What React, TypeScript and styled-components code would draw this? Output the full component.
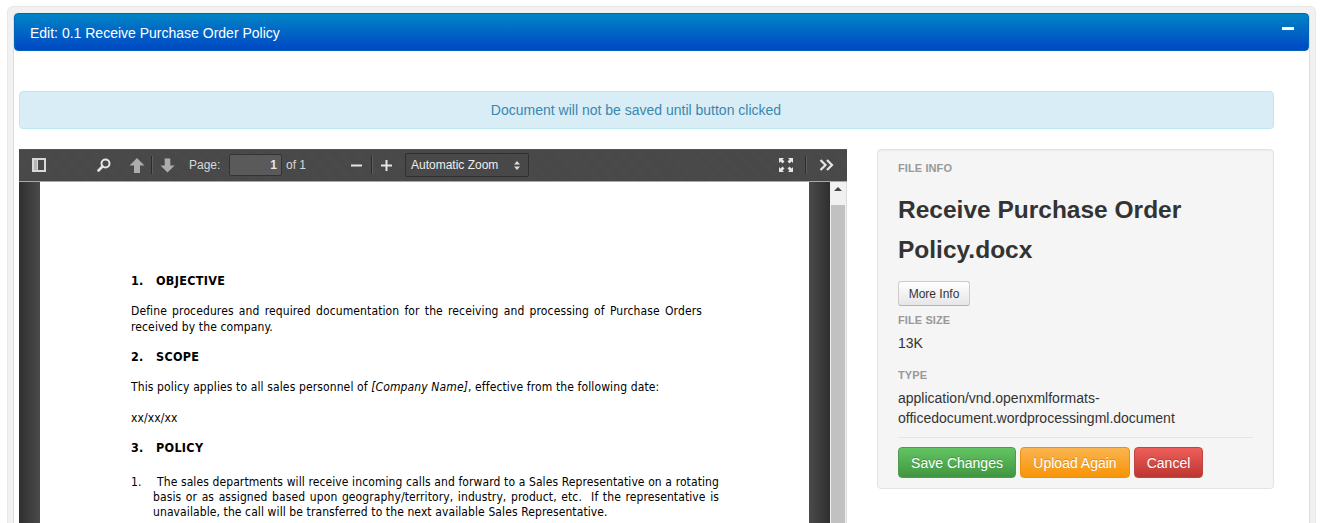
import React from "react";
import styled, { createGlobalStyle } from "styled-components";

const GlobalStyle = createGlobalStyle`
  html, body {
    margin: 0;
    padding: 0;
    height: 523px;
    overflow: hidden;
    background: #fff;
    font-family: "Liberation Sans", Arial, sans-serif;
    font-size: 14px;
    color: #333;
  }
  * { box-sizing: border-box; }
`;

const Frame = styled.div`
  margin: 6px 8px 0 7px;
  height: 517px;
  padding: 6px 5px 0 5px;
  border: 1px solid #e8e8e8;
  border-bottom: 0;
  border-radius: 6px 6px 0 0;
  background: #f1f1f1;
  overflow: hidden;
`;

const Panel = styled.section`
  height: 100%;
  background: #fff;
  border: 1px solid #ddd;
  border-width: 0 1px;
  border-radius: 4px 4px 0 0;
`;

const PanelHeader = styled.header`
  height: 38px;
  display: flex;
  align-items: flex-start;
  justify-content: space-between;
  padding: 11px 14px 0 15px;
  font-size: 14px;
  line-height: 16px;
  color: #fff;
  background: linear-gradient(to bottom, #0085c6, #0047c4);
  border: 1px solid #0065b8;
  border-radius: 4px;
`;

const Collapse = styled.span`
  width: 12px;
  height: 3px;
  margin-top: 2px;
  background: #fff;
`;

const PanelBody = styled.div`
  padding: 40px 35px 0 5px;
`;

const Alert = styled.div`
  height: 38px;
  padding-right: 21px;
  line-height: 36px;
  text-align: center;
  color: #3a87ad;
  font-size: 14px;
  background: #d9edf7;
  border: 1px solid #bce8f1;
  border-radius: 4px;
  margin-bottom: 20px;
`;

const Columns = styled.div`
  display: grid;
  grid-template-columns: 828px 397px;
  column-gap: 30px;
  align-items: start;
`;

const Viewer = styled.div`
  height: 400px;
  background: #404040;
  overflow: hidden;
`;

const Toolbar = styled.div`
  height: 33px;
  display: flex;
  align-items: center;
  padding: 0 13px;
  color: #d9d9d9;
  font-size: 12px;
  background: #474747;
  background-image: repeating-linear-gradient(45deg, rgba(255,255,255,.02) 0 1px, transparent 1px 2px);
  border-bottom: 1px solid #a8a8a8;
  box-shadow: inset 0 1px 0 #555;
`;

const ToolIcon = styled.svg<{ $gap?: number; $dim?: boolean }>`
  flex: none;
  margin-left: ${p => p.$gap ?? 0}px;
  opacity: ${p => (p.$dim ? 0.55 : 0.95)};
`;

const Sep = styled.span<{ $gap: number }>`
  flex: none;
  width: 1px;
  height: 18px;
  margin-left: ${p => p.$gap}px;
  background: #2c2c2c;
  box-shadow: 1px 0 0 #5d5d5d;
`;

const ToolText = styled.span<{ $gap: number; $w?: number }>`
  flex: none;
  margin-left: ${p => p.$gap}px;
  width: ${p => (p.$w ? `${p.$w}px` : "auto")};
`;

const PageInput = styled.div`
  flex: none;
  width: 53px;
  height: 22px;
  margin-left: 9px;
  padding-right: 4px;
  line-height: 20px;
  text-align: right;
  font-size: 12px;
  font-weight: bold;
  color: #e8e8e8;
  background: #5a5a5a;
  border: 1px solid #333;
  border-radius: 2px;
`;

const ZoomSelect = styled.div`
  flex: none;
  width: 124px;
  height: 24px;
  margin-left: 13px;
  padding: 0 8px 0 5px;
  display: flex;
  align-items: center;
  justify-content: space-between;
  color: #eee;
  font-size: 12px;
  background: #484848;
  border: 1px solid #303030;
  border-radius: 2px;
`;

const Spacer = styled.span`
  flex: 1;
`;

const ViewerBody = styled.div`
  height: 367px;
  display: flex;
`;

const PageArea = styled.div`
  flex: 1;
  padding: 0 21px;
  background: linear-gradient(to right, #2f2f2f, #4a4a4a 21px, #4a4a4a calc(100% - 21px), #2f2f2f);
`;

const Sheet = styled.div`
  height: 100%;
  padding: 91px 90px 0 91px;
  background: #fff;
  color: #000;
  font-family: "DejaVu Sans Condensed", "DejaVu Sans", sans-serif;
  font-stretch: condensed;
  font-size: 12px;
  letter-spacing: .12px;
  line-height: 15.5px;
`;

const DocHeading = styled.h3`
  margin: 0 0 15px 0;
  font-size: 12.5px;
  letter-spacing: .3px;
  font-weight: bold;
  display: flex;
  line-height: 16px;
`;

const DocNumber = styled.span`
  width: 25px;
`;

const DocPara = styled.p<{ $mb?: number; $inset?: number }>`
  margin: 0 ${p => p.$inset ?? 0}px ${p => p.$mb ?? 15}px 0;
  text-align: justify;
`;

const DocList = styled.p`
  margin: 19px 0 0 0;
  padding-left: 22px;
  text-indent: -22px;
  line-height: 15px;
  letter-spacing: .1px;
  text-align: justify;
`;

const ListMarker = styled.span`
  display: inline-block;
  width: 26px;
  text-indent: 0;
`;

const Scrollbar = styled.div`
  width: 17px;
  flex: none;
  background: #f1f1f1;
  display: flex;
  flex-direction: column;
  align-items: center;
  border-right: 1px solid #ddd;
`;

const ScrollArrow = styled.span`
  margin: 5px 0 14px 0;
  border: 4px solid transparent;
  border-top: 0;
  border-bottom: 4px solid #444;
`;

const ScrollThumb = styled.span`
  width: 14px;
  flex: 1;
  background: #c1c1c1;
`;

const Well = styled.aside`
  height: 340px;
  padding: 11px 20px 0 20px;
  background: #f5f5f5;
  border: 1px solid #e3e3e3;
  border-radius: 4px;
  box-shadow: inset 0 1px 1px rgba(0,0,0,.05);
`;

const Label = styled.div<{ $top?: number }>`
  margin-top: ${p => p.$top ?? 0}px;
  font-size: 11px;
  line-height: 14px;
  font-weight: bold;
  color: #999;
  letter-spacing: .1px;
  text-transform: uppercase;
`;

const FileName = styled.h2`
  margin: 15px 0 11px 0;
  font-size: 24.5px;
  line-height: 40px;
  font-weight: bold;
  color: #333;
`;

const MoreButton = styled.button`
  display: block;
  width: 72px;
  height: 25px;
  padding: 0;
  font: 12px "Liberation Sans", Arial, sans-serif;
  color: #333;
  background: linear-gradient(to bottom, #fff, #e6e6e6);
  border: 1px solid #ccc;
  border-bottom-color: #b3b3b3;
  border-radius: 3px;
`;

const Value = styled.div<{ $mt: number }>`
  margin-top: ${p => p.$mt}px;
  font-size: 14px;
  line-height: 20px;
  color: #333;
`;

const Actions = styled.div`
  margin-top: 9px;
  padding-top: 9px;
  border-top: 1px solid #e5e5e5;
  display: flex;
  gap: 4px;
`;

const ActionButton = styled.button<{ $from: string; $to: string; $w: number; $edge: string }>`
  width: ${p => p.$w}px;
  height: 31px;
  padding: 0;
  color: #fff;
  font: 14px "Liberation Sans", Arial, sans-serif;
  text-shadow: 0 -1px 0 rgba(0,0,0,.2);
  background: linear-gradient(to bottom, ${p => p.$from}, ${p => p.$to});
  border: 1px solid ${p => p.$edge};
  border-radius: 4px;
`;

export default function App() {
  return (
    <>
      <GlobalStyle />
      <Frame>
        <Panel>
          <PanelHeader>
            <span>Edit: 0.1 Receive Purchase Order Policy</span>
            <Collapse />
          </PanelHeader>
          <PanelBody>
            <Alert>Document will not be saved until button clicked</Alert>
            <Columns>
              <Viewer>
                <Toolbar>
                  <ToolIcon width="14" height="14" viewBox="0 0 14 14">
                    <path fill="#e0e0e0" fillRule="evenodd" d="M0 0h14v14H0zM2 2v10h2.500V2zM6 2v10h6V2z" />
                    <rect x="2" y="2" width="3" height="10" fill="#bbb" />
                  </ToolIcon>
                  <ToolIcon $gap={51} width="14" height="14" viewBox="0 0 14 14">
                    <circle cx="8.500" cy="5.500" r="4" fill="none" stroke="#eee" strokeWidth="2" />
                    <path d="M5.500 8.500L1.500 12.500" stroke="#eee" strokeWidth="2.600" strokeLinecap="round" />
                  </ToolIcon>
                  <ToolIcon $gap={18} $dim width="16" height="15" viewBox="0 0 16 15">
                    <path fill="#fff" d="M8 0l7.500 7.500H11V15H5V7.500H.5z" />
                  </ToolIcon>
                  <Sep $gap={6} />
                  <ToolIcon $gap={8} $dim width="15" height="15" viewBox="0 0 16 15">
                    <path fill="#fff" d="M8 15L.5 7.500H5V0h6v7.500h4.500z" />
                  </ToolIcon>
                  <ToolText $gap={14} $w={31}>Page:</ToolText>
                  <PageInput>1</PageInput>
                  <ToolText $gap={4} $w={25}>of 1</ToolText>
                  <ToolIcon $gap={40} width="11" height="11" viewBox="0 0 11 11">
                    <rect y="4.500" width="11" height="2" fill="#eee" />
                  </ToolIcon>
                  <Sep $gap={9} />
                  <ToolIcon $gap={9} width="11" height="11" viewBox="0 0 11 11">
                    <path fill="#eee" d="M0 4.500h4.500V0h2v4.500H11v2H6.500V11h-2V6.500H0z" />
                  </ToolIcon>
                  <ZoomSelect>
                    <span>Automatic Zoom</span>
                    <svg width="6" height="9" viewBox="0 0 6 9">
                      <path fill="#ddd" d="M3 0l3 3.500H0zM3 9L0 5.500h6z" />
                    </svg>
                  </ZoomSelect>
                  <Spacer />
                  <ToolIcon width="14" height="14" viewBox="0 0 14 14">
                    <path fill="#eee" d="M0 0h5L3.500 1.500 5.500 3.500 3.500 5.500 1.500 3.500 0 5zM14 0v5l-1.500-1.500-2 2-2-2 2-2L9 0zM0 14V9l1.500 1.500 2-2 2 2-2 2L5 14zM14 14H9l1.500-1.500-2-2 2-2 2 2L14 9z" />
                  </ToolIcon>
                  <Sep $gap={12} />
                  <ToolIcon $gap={13} width="15" height="12" viewBox="0 0 15 12">
                    <path fill="none" stroke="#eee" strokeWidth="2.200" d="M1.500 1l5 5-5 5M8 1l5 5-5 5" />
                  </ToolIcon>
                </Toolbar>
                <ViewerBody>
                  <PageArea>
                    <Sheet>
                      <DocHeading><DocNumber>1.</DocNumber>OBJECTIVE</DocHeading>
                      <DocPara $mb={14} $inset={17}>
                        Define procedures and required documentation for the receiving and processing of Purchase Orders received by the company.
                      </DocPara>
                      <DocHeading><DocNumber>2.</DocNumber>SCOPE</DocHeading>
                      <DocPara>
                        This policy applies to all sales personnel of <em>[Company Name]</em>, effective from the following date:
                      </DocPara>
                      <DocPara $mb={14}>xx/xx/xx</DocPara>
                      <DocHeading><DocNumber>3.</DocNumber>POLICY</DocHeading>
                      <DocList>
                        <ListMarker>1.</ListMarker>The sales departments will receive incoming calls and forward to a Sales Representative on a rotating basis or as assigned based upon geography/territory, industry, product, etc.&nbsp; If the representative is unavailable, the call will be transferred to the next available Sales Representative.
                      </DocList>
                    </Sheet>
                  </PageArea>
                  <Scrollbar>
                    <ScrollArrow />
                    <ScrollThumb />
                  </Scrollbar>
                </ViewerBody>
              </Viewer>
              <Well>
                <Label>File Info</Label>
                <FileName>Receive Purchase Order Policy.docx</FileName>
                <MoreButton>More Info</MoreButton>
                <Label $top={7}>File Size</Label>
                <Value $mt={6}>13K</Value>
                <Label $top={15}>Type</Label>
                <Value $mt={6}>application/vnd.openxmlformats-officedocument.wordprocessingml.document</Value>
                <Actions>
                  <ActionButton $w={118} $from="#62c462" $to="#419641" $edge="#4a9c4a">Save Changes</ActionButton>
                  <ActionButton $w={110} $from="#fbb450" $to="#f89406" $edge="#e8930f">Upload Again</ActionButton>
                  <ActionButton $w={69} $from="#ee5f5b" $to="#bd362f" $edge="#c24440">Cancel</ActionButton>
                </Actions>
              </Well>
            </Columns>
          </PanelBody>
        </Panel>
      </Frame>
    </>
  );
}
